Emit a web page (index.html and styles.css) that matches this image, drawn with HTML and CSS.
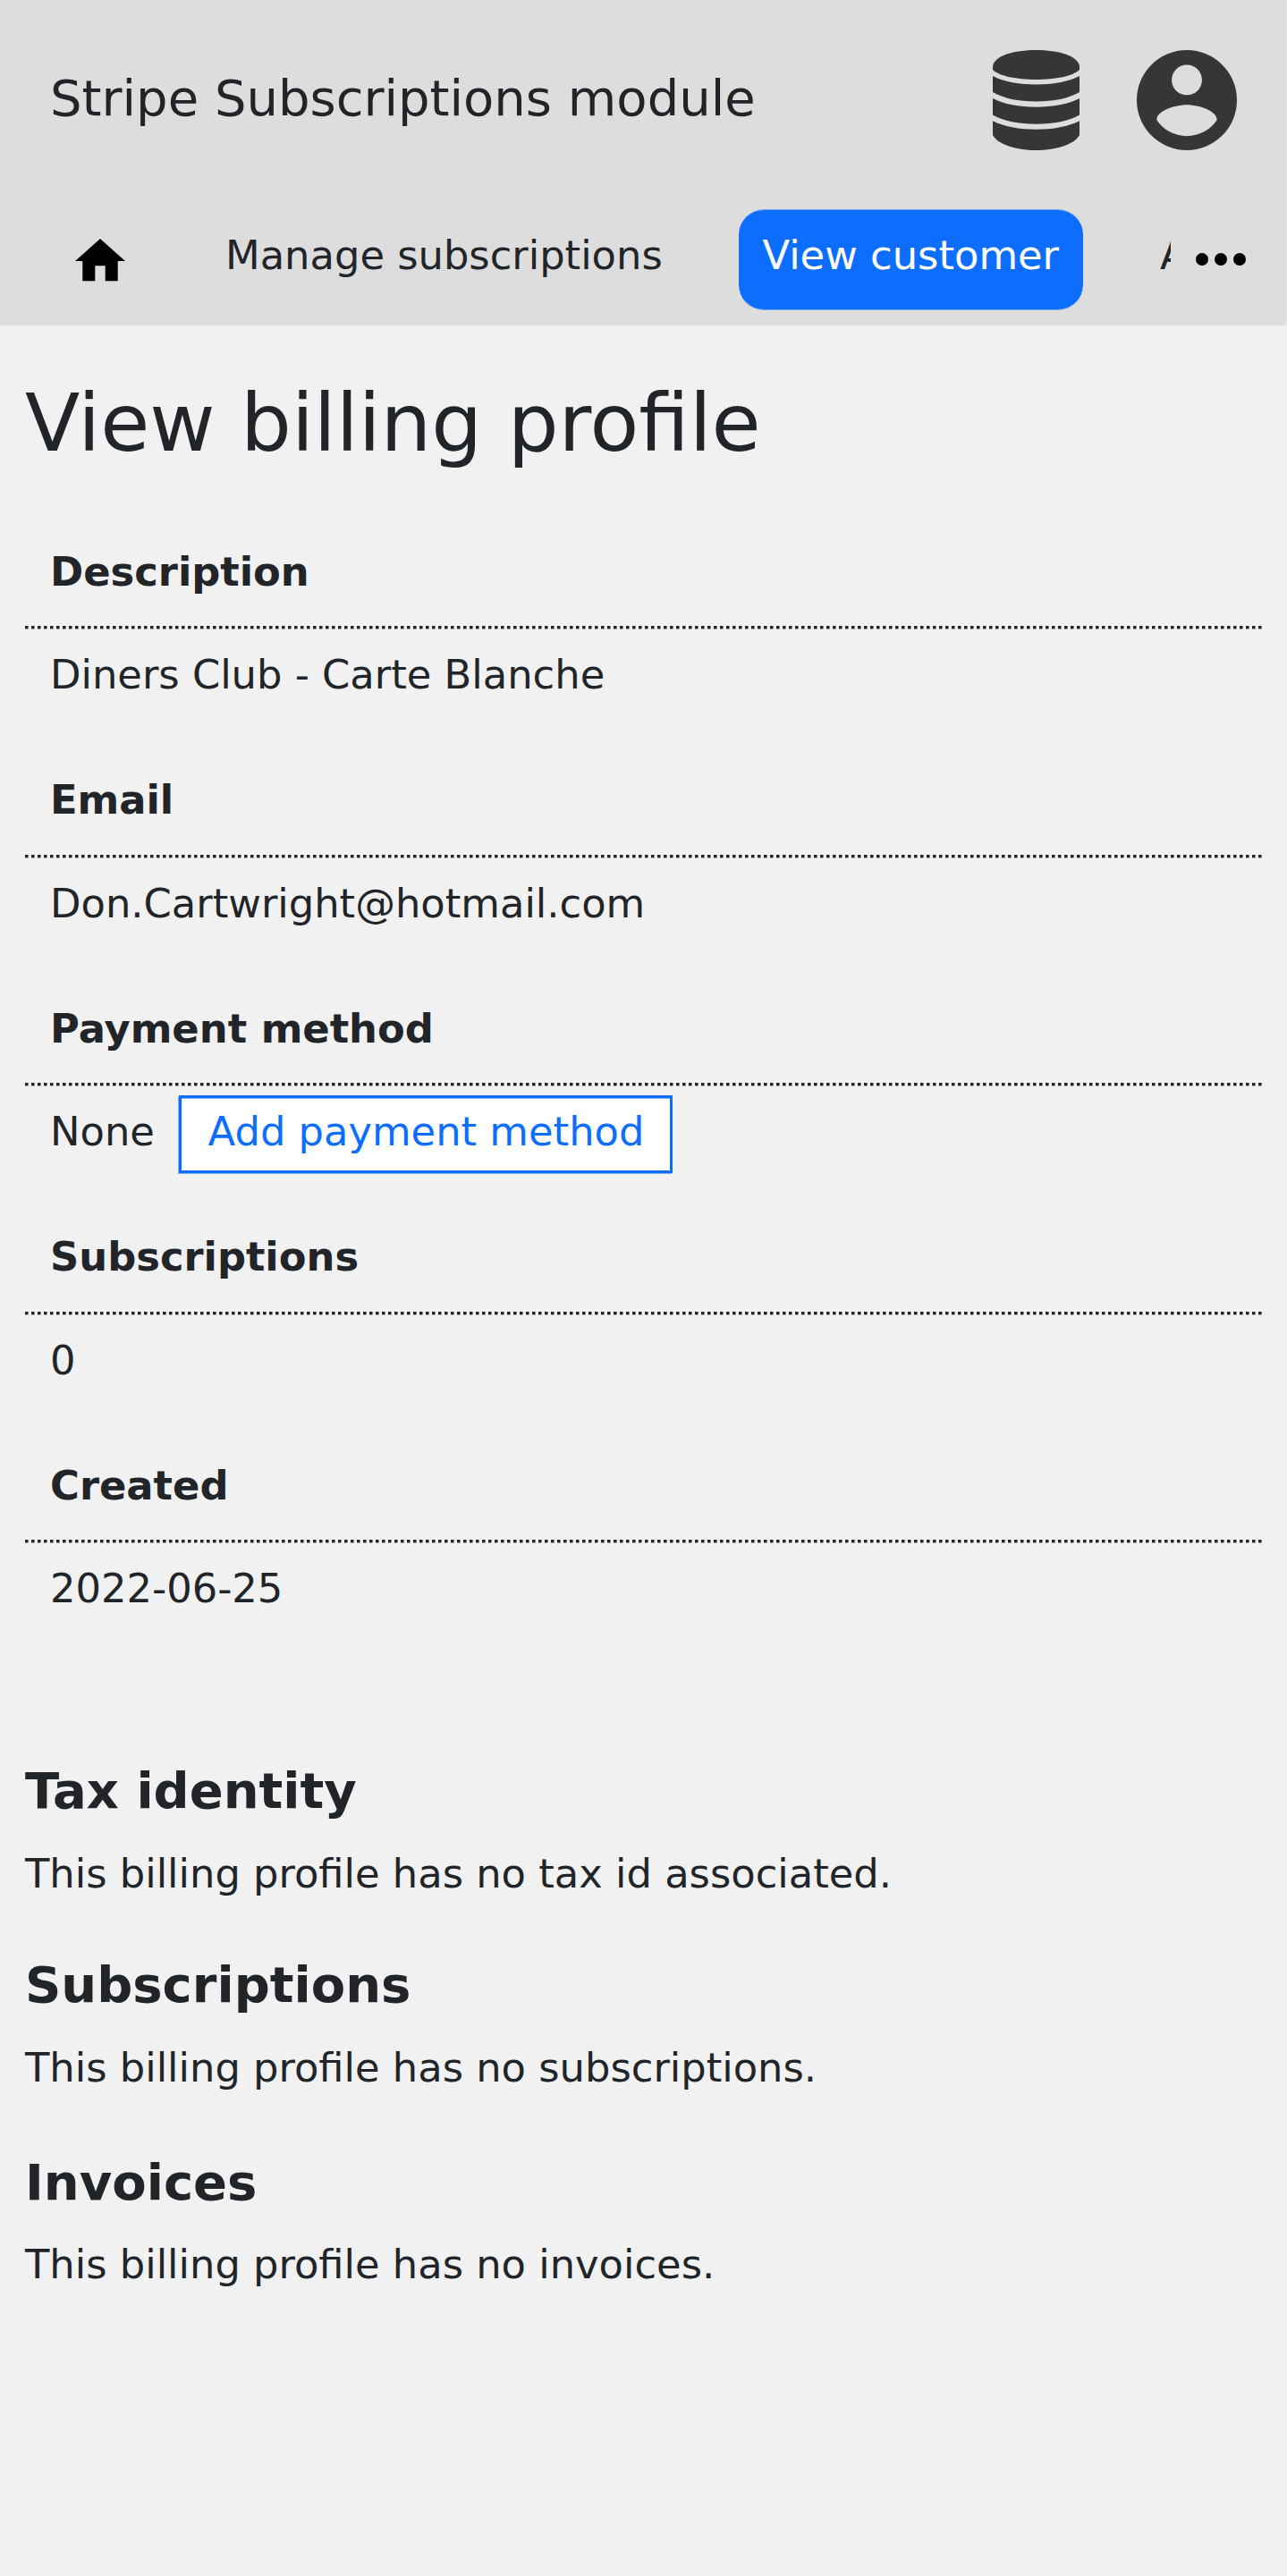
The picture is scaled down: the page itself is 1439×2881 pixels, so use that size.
FILE: index.html
```html
<!DOCTYPE html>
<html lang="en">
<head>
<meta charset="utf-8">
<title>View billing profile</title>
<link rel="stylesheet" href="styles.css">
</head>
<body>
<header class="header">
  <div class="topbar">
    <div class="brand">Stripe Subscriptions module</div>
    <svg class="icon-db" viewBox="0 0 97 112" fill="#363636"><path d="M0 18C2 6 24 0 48.500 0S95 6 97 18V22C90 29 70 33 48.500 33S7 29 0 22Z"/><path d="M0 29C12 35.500 30 38.500 48.500 38.500S85 35.500 97 29V47C85 54 68 57.500 48.500 57.500S12 54 0 47Z"/><path d="M0 54C12 60.500 30 63.700 48.500 63.700S85 60.500 97 54V72.500C85 79.500 68 82.700 48.500 82.700S12 79.500 0 72.500Z"/><path d="M0 79.300C12 85.500 30 88.800 48.500 88.800S85 85.500 97 79.300V95C92 105 72 112 48.500 112S5 105 0 95Z"/></svg>
    <svg class="icon-user" viewBox="0 0 496 512" fill="#363636"><path fill-rule="evenodd" d="M248 8a248 248 0 1 0 0 496a248 248 0 1 0 0-496ZM248 81a75 75 0 1 1 0 150a75 75 0 1 1 0-150ZM248 434C186 434 132 404 99 355C96 307 193 279 248 279S400 307 397 355C364 404 310 434 248 434Z"/></svg>
  </div>
  <nav class="nav">
    <a class="home"><svg viewBox="0 0 56 48"><path d="M28 0L56 25H47.700V47.300H33.700V30.300H22.300V47.300H8.300V25H0Z"/></svg></a>
    <a class="item manage">Manage subscriptions</a>
    <a class="item active">View customer</a>
    <a class="item clipped">Account</a>
    <svg class="more" viewBox="0 0 56 14"><circle cx="7" cy="7" r="7"/><circle cx="28" cy="7" r="7"/><circle cx="49" cy="7" r="7"/></svg>
  </nav>
</header>
<main class="main">
  <h1>View billing profile</h1>
  <dl class="details">
    <div class="row"><dt>Description</dt><dd>Diners Club - Carte Blanche</dd></div>
    <div class="row"><dt>Email</dt><dd>Don.Cartwright@hotmail.com</dd></div>
    <div class="row"><dt>Payment method</dt><dd><span class="none">None</span><a class="button">Add payment method</a></dd></div>
    <div class="row"><dt>Subscriptions</dt><dd>0</dd></div>
    <div class="row"><dt>Created</dt><dd>2022-06-25</dd></div>
  </dl>
  <section class="section"><h2>Tax identity</h2><p>This billing profile has no tax id associated.</p></section>
  <section class="section"><h2>Subscriptions</h2><p>This billing profile has no subscriptions.</p></section>
  <section class="section last"><h2>Invoices</h2><p>This billing profile has no invoices.</p></section>
</main>
</body>
</html>
```
FILE: styles.css
```css
* { box-sizing: border-box; }
body {
  margin: 0;
  min-height: 2881px;
  background: #f1f1f1;
  color: #212529;
  font: 44.8px "DejaVu Sans", sans-serif;
}
h1, h2, p, dl, dt, dd { margin: 0; }
svg { display: block; flex: none; }

.header {
  height: 364px;
  background: #ddd;
  border-right: 1px solid #e7e7e7;
}
.topbar {
  display: flex;
  align-items: flex-start;
  height: 222px;
  padding-left: 56px;
}
.brand { width: 1054px; font-size: 56px; line-height: 219px; }
.icon-db { width: 97px; height: 112px; margin-top: 56px; }
.icon-user { width: 112px; height: 116px; margin: 54px 0 0 64px; }

.nav {
  display: flex;
  align-items: flex-start;
  height: 142px;
  padding-top: 12px;
  white-space: nowrap;
}
.home { width: 222px; padding: 33px 0 0 84px; }
.home svg { width: 56px; height: 48px; }
.item {
  flex: none;
  height: 113px;
  line-height: 101px;
  border: 0 solid rgba(13, 110, 253, .5);
  padding-top: 1px;
}
.manage { width: 604px; padding-left: 30px; }
.active {
  width: 385px;
  padding: 0 0 0 26.500px;
  border-width: 1px 0;
  border-radius: 28px;
  background: #0d6efd;
  background-clip: padding-box;
  color: #fff;
}
.clipped { width: 12px; margin-left: 86px; overflow: hidden; }
.more { width: 56px; height: 14px; margin: 49px 0 0 28px; }

.main { padding: 53px 28px 0; }
h1 { font-size: 89.6px; font-weight: 400; line-height: 112px; }
.details { margin-top: 70.7px; }
.row { height: 255.5px; }
dt {
  height: 104.4px;
  padding: 0 28px 25.4px;
  line-height: 79px;
  font-weight: 700;
  background:
    linear-gradient(transparent 3px, rgba(241, 241, 241, .6) 3px) bottom / 100% 4px no-repeat,
    repeating-linear-gradient(90deg, #212529 0 3px, rgba(33, 37, 41, .55) 3px 4px, transparent 4px 7px) bottom / 100% 4px no-repeat;
}
dd { display: flex; align-items: flex-start; padding: 0 28px; line-height: 101px; }
.none { width: 144px; }
.button {
  width: 552px;
  height: 87px;
  margin-top: 10px;
  padding-left: 1px;
  border: 3px solid #0d6efd;
  box-shadow: -1px 1px 0 rgba(13, 110, 253, .5), inset 0 1px 0 rgba(13, 110, 253, .5);
  background: #fff;
  color: #0d6efd;
  line-height: 75px;
  text-align: center;
}

.section { margin-bottom: 57px; }
.details + .section { margin-top: 91.8px; }
.section + .section + .section { margin-top: 61px; }
.section:nth-last-child(2) { margin-bottom: 0; }
h2 { margin-bottom: 26px; font-size: 56px; font-weight: 700; line-height: 67px; }
.last h2 { margin-bottom: 25px; }
p { line-height: 67px; }
```
